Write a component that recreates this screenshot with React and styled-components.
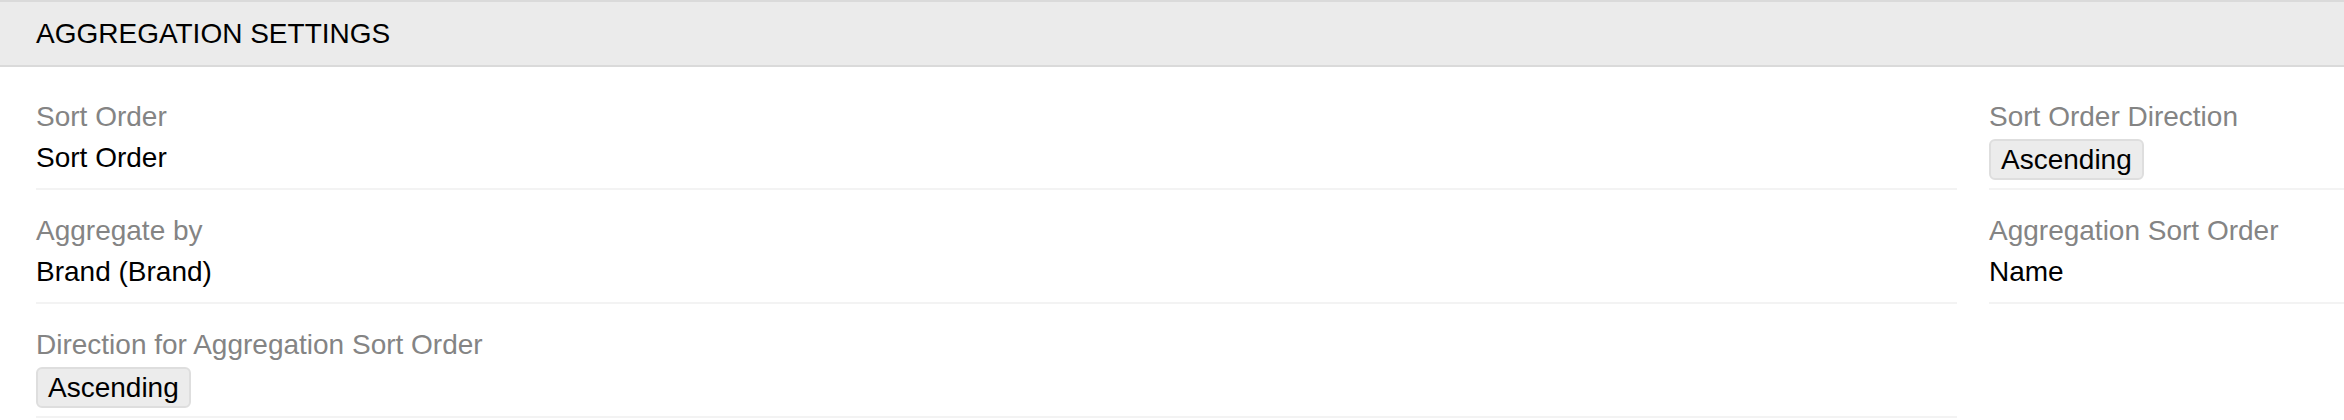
import styled, { createGlobalStyle } from "styled-components";

const GlobalStyle = createGlobalStyle`
  body {
    margin: 0;
    background: #ffffff;
    font-family: "Liberation Sans", Arial, Helvetica, sans-serif;
  }
`;

const Panel = styled.section`
  width: 2344px;
  overflow: hidden;
`;

const Header = styled.div`
  height: 63px;
  display: flex;
  align-items: center;
  padding-left: 36px;
  background: #ebebeb;
  border-top: 2px solid #dadada;
  border-bottom: 2px solid #dadada;
  font-size: 28px;
  color: #000;
`;

const Body = styled.div`
  display: grid;
  grid-template-columns: 1fr 355px;
  column-gap: 32px;
  padding: 9px 0 0 36px;
  align-items: start;
`;

const Field = styled.div`
  padding: 23px 0 12px;
  border-bottom: 2px solid #f3f3f3;
`;

const Label = styled.div`
  font-size: 28px;
  line-height: 36px;
  color: #848484;
  white-space: nowrap;
`;

const Value = styled.div`
  height: 36px;
  margin-top: 5px;
  font-size: 28px;
  line-height: 36px;
  color: #000;
  display: flex;
  align-items: flex-start;
  white-space: nowrap;
`;

const Badge = styled.span`
  box-sizing: border-box;
  height: 41px;
  margin-top: -1px;
  padding: 0 10px;
  display: inline-flex;
  align-items: center;
  background: #ececec;
  border: 2px solid #dedede;
  border-radius: 6px;
  font-size: 28px;
  line-height: 1;
`;

const fields = [
  { label: "Sort Order", value: "Sort Order" },
  { label: "Sort Order Direction", value: "Ascending", badge: true },
  { label: "Aggregate by", value: "Brand (Brand)" },
  { label: "Aggregation Sort Order", value: "Name" },
  { label: "Direction for Aggregation Sort Order", value: "Ascending", badge: true },
];

export default function App() {
  return (
    <>
      <GlobalStyle />
      <Panel>
        <Header>AGGREGATION SETTINGS</Header>
        <Body>
          {fields.map((f) => (
            <Field key={f.label}>
              <Label>{f.label}</Label>
              <Value>{f.badge ? <Badge>{f.value}</Badge> : f.value}</Value>
            </Field>
          ))}
        </Body>
      </Panel>
    </>
  );
}
